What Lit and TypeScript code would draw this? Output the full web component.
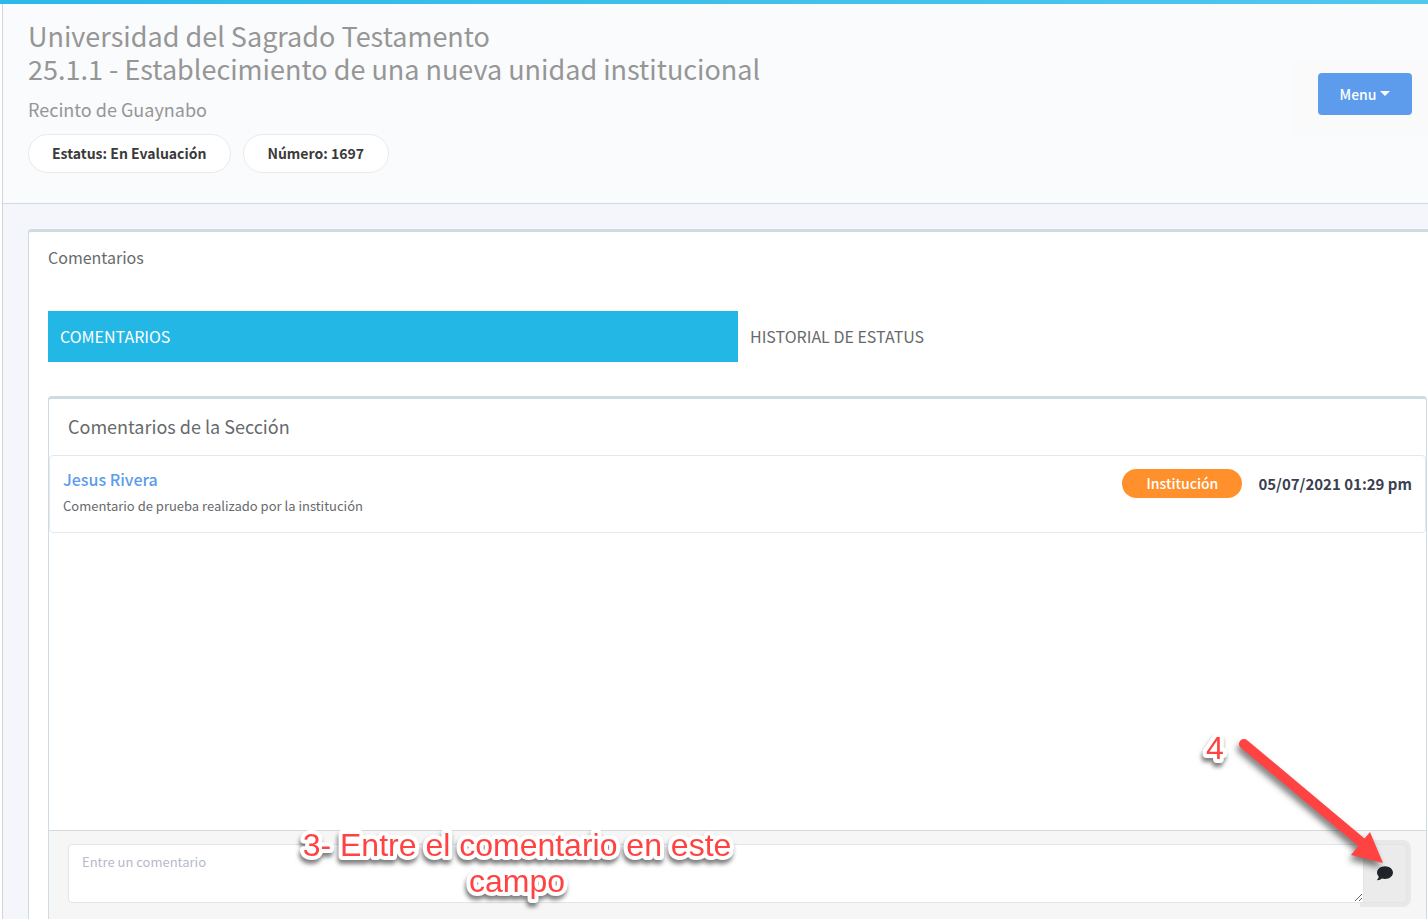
import { LitElement, html, css } from "lit";
import { customElement, state } from "lit/decorators.js";

@customElement("app-root")
export class AppRoot extends LitElement {
  @state() private tab = "comentarios";

  static styles = css`
    :host {
      display: block;
      position: relative;
      height: 100vh;
      overflow: hidden;
      background: #fff;
      color: #676a6c;
      font-family: "Source Sans Pro", "Noto Sans CJK SC", "Open Sans", sans-serif;
      font-size: 14px;
      line-height: 20px;
    }
    * { box-sizing: border-box; }
    h1, h2, h3, p { margin: 0; font-weight: 400; }
    button, textarea { font: inherit; margin: 0; }
    .page { height: 100%; display: flex; flex-direction: column; }
    .stripe { flex: none; height: 4px; background: linear-gradient(90deg, #2ab9e8, #52c7ee); }
    .main {
      flex: 1; min-height: 0; display: flex; flex-direction: column;
      margin-left: 2px; border-left: 1px solid #d3d5d9; background: #f5f6fb;
    }
    .head {
      display: flex; align-items: center; justify-content: space-between;
      height: 200px; padding-left: 25px;
      background: #fafbfd; border-bottom: 1px solid #cfdbe2;
    }
    .titles { align-self: flex-start; padding-top: 15px; color: #969696; }
    .titles h1 { font-size: 27px; line-height: 33px; }
    .titles h2 { font-size: 18px; line-height: 24px; margin-top: 12px; }
    .pills { display: flex; gap: 12px; margin-top: 13px; }
    .pill {
      height: 39px; padding: 0 24px 0 23px; border: 1px solid #e8eaec; border-radius: 20px;
      background: #fff; color: #3a3a3a; font-weight: 700; line-height: 37px;
    }
    .actions { padding: 12px 16px 21px 25px; margin-bottom: 10px; background: #fafafa; }
    .menu {
      display: flex; align-items: center; justify-content: center; gap: 4px;
      width: 94px; height: 42px; padding: 0; border: 0; border-radius: 4px;
      background: #5d9cec; color: #fff; font-weight: 500;
    }
    .caret { border: 5px solid transparent; border-top-color: #fff; border-bottom: 0; margin-bottom: 2px; }
    .panel {
      flex: 1; min-height: 0; display: flex; flex-direction: column;
      margin: 25px 0 0 25px; padding-left: 19px;
      background: #fff; border: 1px solid #cfdbe2; border-top-width: 3px;
      border-right: 0; border-bottom: 0; border-top-left-radius: 4px;
    }
    .panel > h2 { font-size: 16px; line-height: 24px; padding-top: 13px; }
    .tabs { display: grid; grid-template-columns: 1fr 1fr; margin-top: 42px; }
    .tab {
      height: 51px; padding: 0 12px 2px; border: 0; background: none;
      color: #676a6c; text-align: left; font-size: 16px;
    }
    .tab.on { background: #23b7e5; color: #fff; }
    .card {
      flex: 1; min-height: 0; display: flex; flex-direction: column;
      margin: 34px 1px 0 0; border: 1px solid #cfdbe2; border-top-width: 3px;
      border-bottom: 0; border-radius: 4px 4px 0 0;
    }
    .card h3 { padding: 15px 19px 17px; font-size: 18px; line-height: 24px; }
    .comment {
      display: flex; justify-content: space-between; height: 78px; padding: 12px 13px;
      border: 1px solid #e4eaec; border-radius: 4px;
    }
    .name { display: block; color: #5d9cec; font-size: 16px; line-height: 22px; font-weight: 500; text-decoration: none; }
    .text { line-height: 20px; margin-top: 6px; font-size: 13px; }
    .meta { display: flex; gap: 16px; align-self: flex-start; align-items: center; color: #3a3f51; font-size: 15px; font-weight: 700; line-height: 29px; }
    .badge { width: 120px; border-radius: 15px; background: #ff902b; color: #fff; font-size: 14px; font-weight: 500; text-align: center; margin-top: 1px; }
    .space { flex: 1; }
    .foot { display: flex; padding: 13px 19px 16px; background: #f6f6f6; border-top: 1px solid #d3d9dc; }
    .box {
      position: relative; z-index: 1; flex: 1; min-width: 0; height: 59px; padding: 7px 13px;
      border: 1px solid #dde6e9; border-radius: 4px 0 0 4px; background: #fff;
      color: #3a3f51; outline: 0; line-height: 20px; font-size: 13px;
    }
    .box::placeholder { color: #b7b9cc; opacity: 1; }
    .send {
      display: grid; place-items: center; width: 43px; height: 59px; padding: 0 0 2px;
      border: 1px solid #dde6e9; border-left: 0; border-radius: 0 4px 4px 0;
      background: #ebebeb; box-shadow: 0 0 0 4px #e8e8e8;
    }
    .note {
      position: absolute; z-index: 2; pointer-events: none; overflow: visible;
      font-family: "Liberation Sans", Arial, sans-serif; font-size: 32px;
      fill: #ff4343; stroke: #fff; stroke-width: 8px; stroke-linejoin: round; paint-order: stroke;
      filter: drop-shadow(-1px 4px 2px rgba(0, 0, 0, 0.5));
    }
    .field { left: 297px; bottom: 18px; }
    .four { right: 195px; bottom: 150px; }
    .arrow { position: absolute; right: 34px; bottom: 40px; z-index: 2; pointer-events: none; filter: drop-shadow(-2px 5px 3px rgba(0, 0, 0, 0.5)); }
  `;

  render() {
    return html`
      <div class="page">
        <div class="stripe"></div>
        <main class="main">
          <header class="head">
            <div class="titles">
              <h1>Universidad del Sagrado Testamento<br />25.1.1 - Establecimiento de una nueva unidad institucional</h1>
              <h2>Recinto de Guaynabo</h2>
              <div class="pills">
                <span class="pill">Estatus: En Evaluación</span>
                <span class="pill">Número: 1697</span>
              </div>
            </div>
            <div class="actions">
              <button class="menu" aria-haspopup="true">Menu<span class="caret"></span></button>
            </div>
          </header>
          <section class="panel">
            <h2>Comentarios</h2>
            <div class="tabs" role="tablist">
              ${this.renderTab("comentarios", "COMENTARIOS")}
              ${this.renderTab("historial", "HISTORIAL DE ESTATUS")}
            </div>
            <section class="card">
              <h3>Comentarios de la Sección</h3>
              <article class="comment">
                <div>
                  <a class="name" href="#">Jesus Rivera</a>
                  <p class="text">Comentario de prueba realizado por la institución</p>
                </div>
                <div class="meta">
                  <span class="badge">Institución</span>
                  <time datetime="2021-05-07T13:29">05/07/2021 01:29 pm</time>
                </div>
              </article>
              <div class="space"></div>
              <form class="foot" @submit=${(e: Event) => e.preventDefault()}>
                <textarea class="box" aria-label="Comentario" placeholder="Entre un comentario"></textarea>
                <button class="send" aria-label="Enviar comentario">
                  <svg width="16" height="16" viewBox="0 0 16 16" fill="#212529" aria-hidden="true">
                    <path d="M8 1.2C3.6 1.2 0 4 0 7.6c0 1.5.7 3 1.8 4.1-.3 1.2-1 2.2-1.7 3-.2.3 0 .6.3.6 1.8 0 3.4-.8 4.4-1.7 1 .3 2.1.5 3.2.5 4.4 0 8-2.9 8-6.5S12.4 1.2 8 1.2z" />
                  </svg>
                </button>
              </form>
            </section>
          </section>
        </main>
      </div>
      <svg class="note field" width="440" height="74" viewBox="0 0 440 74">
        <text x="220" y="29" text-anchor="middle">3- Entre el comentario en este</text>
        <text x="220" y="65" text-anchor="middle">campo</text>
      </svg>
      <svg class="note four" width="36" height="40" viewBox="0 0 36 40">
        <text x="18" y="30" text-anchor="middle">4</text>
      </svg>
      <svg class="arrow" width="160" height="150" viewBox="0 0 160 150" aria-hidden="true">
        <path d="M10 15L133 118" stroke="#ff4343" stroke-width="10" stroke-linecap="round" />
        <path d="M149 134L136 103L117 126z" fill="#ff4343" />
      </svg>
    `;
  }

  private renderTab(id: string, label: string) {
    const on = this.tab === id;
    return html`<button class="tab ${on ? "on" : ""}" role="tab" aria-selected=${on ? "true" : "false"}
      @click=${() => (this.tab = id)}>${label}</button>`;
  }
}
